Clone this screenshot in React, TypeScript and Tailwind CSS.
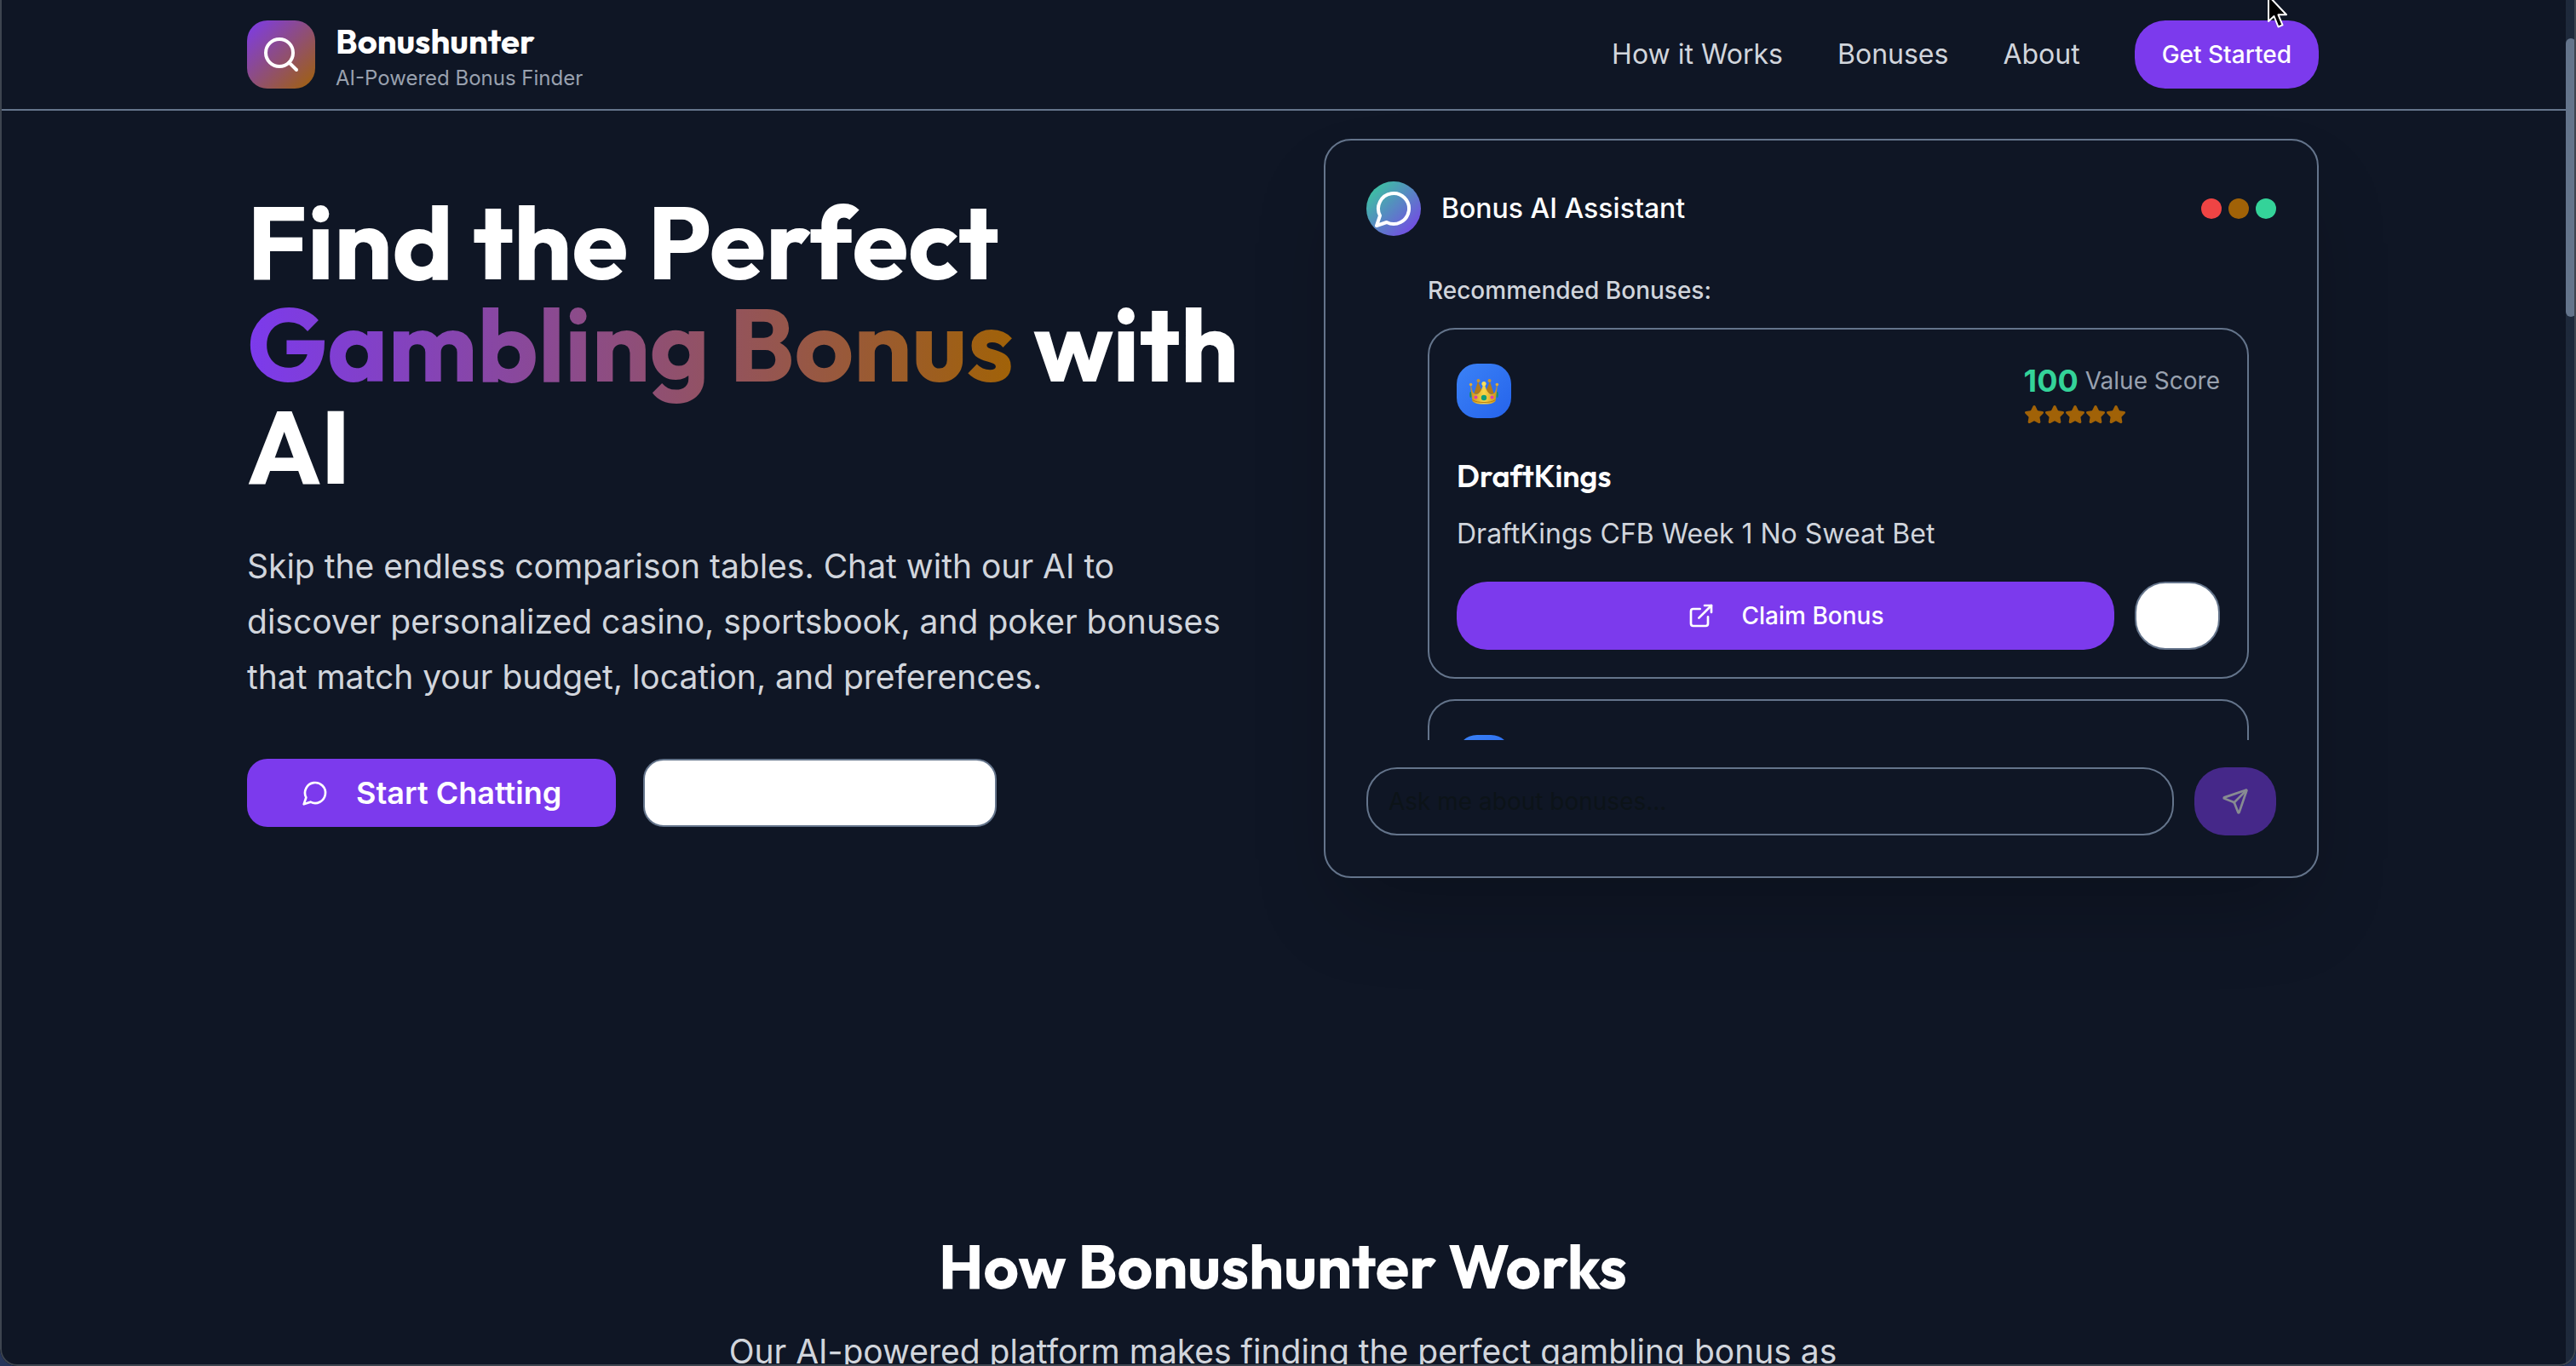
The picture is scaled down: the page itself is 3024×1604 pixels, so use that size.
import type { ReactNode } from "react";
import { ExternalLink, Search, Send, Star } from "lucide-react";

const navLinks = [
  { label: "How it Works", href: "#how-it-works" },
  { label: "Bonuses", href: "#bonuses" },
  { label: "About", href: "#about" },
];

const bonuses = [
  { brand: "DraftKings", offer: "DraftKings CFB Week 1 No Sweat Bet", score: 100 },
  { brand: "DraftKings", offer: "DraftKings CFB Week 1 No Sweat Bet", score: 100 },
];

function ChatIcon({ className }: { className: string }) {
  return (
    <svg
      viewBox="0 0 24 24"
      fill="none"
      stroke="currentColor"
      strokeWidth="2"
      strokeLinecap="round"
      strokeLinejoin="round"
      className={className}
      aria-hidden="true"
    >
      <path d="M7.9 20A9 9 0 1 0 4 16.1L2 22Z" />
    </svg>
  );
}

function CrownIcon() {
  return (
    <svg viewBox="0 0 36 32" className="w-9 h-8" aria-hidden="true">
      <defs>
        <linearGradient id="crown-front" x1="0" y1="0" x2="1" y2="0">
          <stop offset="0" stopColor="#c98d1a" />
          <stop offset="0.5" stopColor="#f8d648" />
          <stop offset="1" stopColor="#c98d1a" />
        </linearGradient>
      </defs>
      <path d="M6 20 11 5l6 14ZM30 20 25 5l-6 14Z" fill="#b07a1c" />
      <circle cx="11.5" cy="4" r="2" fill="#c9962f" />
      <circle cx="24.5" cy="4" r="2" fill="#c9962f" />
      <ellipse cx="2.4" cy="20.5" rx="1.3" ry="3.4" fill="#178f6d" />
      <ellipse cx="33.6" cy="20.5" rx="1.3" ry="3.4" fill="#178f6d" />
      <path
        d="M3 9c1 7 2 11 6 11 4 0 7-6 8-12h2c1 6 4 12 8 12 4 0 5-4 6-11l1 .5-2.500 18.500C29 31 24 31.500 18 31.500S7 31 4.500 28L2 9.500Z"
        fill="url(#crown-front)"
      />
      <path d="M4.500 26.500C8 29 13 29.500 18 29.500s10-.5 13.500-3" fill="none" stroke="#b47b14" strokeWidth="1" />
      <circle cx="2.600" cy="8.500" r="1.800" fill="#e0aa35" />
      <circle cx="33.400" cy="8.500" r="1.800" fill="#e0aa35" />
      <circle cx="18" cy="7.500" r="2.600" fill="#fbe05a" />
      <circle cx="18" cy="24" r="3.200" fill="#0f9d78" />
      <circle cx="8.500" cy="23.500" r="2" fill="#dd3fae" />
      <circle cx="27.500" cy="23.500" r="2" fill="#dd3fae" />
    </svg>
  );
}

function PrimaryButton({ className, children }: { className: string; children: ReactNode }) {
  return (
    <button type="button" className={`flex h-20 items-center justify-center gap-8 bg-[#7c3aed] text-white ${className}`}>
      {children}
    </button>
  );
}

function Header() {
  return (
    <header className="border-b-2 border-[#64748b]">
      <div className="mx-auto flex h-32 max-w-[2560px] items-center justify-between px-16">
        <a href="#" className="flex items-center gap-6">
          <span className="flex size-20 items-center justify-center rounded-3xl bg-linear-to-br/srgb from-[#7c3aed] to-[#a16207]">
            <Search className="size-12 text-white" />
          </span>
          <span className="flex flex-col">
            <span className="font-['Outfit',Lato,sans-serif] text-[40px] leading-[56px] font-bold text-white">Bonushunter</span>
            <span className="text-2xl leading-8 text-gray-400">AI-Powered Bonus Finder</span>
          </span>
        </a>
        <nav className="flex items-center gap-16 text-[32px] leading-[48px] text-gray-300">
          {navLinks.map((link) => (
            <a key={link.label} href={link.href}>
              {link.label}
            </a>
          ))}
          <PrimaryButton className="rounded-[36px] px-8 text-[28px] font-medium">Get Started</PrimaryButton>
        </nav>
      </div>
    </header>
  );
}

function BonusCard({ brand, offer, score }: { brand: string; offer: string; score: number }) {
  return (
    <article className="rounded-[32px] border-2 border-[#64748b] p-8">
      <div className="flex items-center justify-between">
        <span className="flex size-16 items-center justify-center rounded-3xl bg-linear-to-br/srgb from-[#3b82f6] to-[#2563eb]">
          <CrownIcon />
        </span>
        <div>
          <p className="flex items-center gap-2">
            <span className="text-4xl leading-[56px] font-bold text-[#34d399]">{score}</span>
            <span className="text-[28px] leading-10 text-gray-400">Value Score</span>
          </p>
          <div className="flex text-[#a16207]">
            {[1, 2, 3, 4, 5].map((n) => (
              <Star key={n} className="size-6 fill-current" />
            ))}
          </div>
        </div>
      </div>
      <h3 className="mt-8 font-['Outfit',Lato,sans-serif] text-4xl leading-[56px] font-semibold text-white">{brand}</h3>
      <p className="mt-4 text-[32px] leading-[48px] text-gray-300">{offer}</p>
      <div className="mt-8 flex gap-6">
        <PrimaryButton className="flex-1 rounded-[36px] text-[28px] font-medium">
          <ExternalLink className="size-8" />
          Claim Bonus
        </PrimaryButton>
        <button type="button" aria-label="Bonus details" className="h-20 w-25 rounded-[36px] border-2 border-[#64748b] bg-white" />
      </div>
    </article>
  );
}

function Assistant() {
  return (
    <section className="rounded-[32px] border-2 border-[#64748b] p-12 shadow-[0_50px_100px_-24px_rgba(0,0,0,0.25)]">
      <div className="flex items-center justify-between">
        <div className="flex items-center gap-6">
          <span className="flex size-16 items-center justify-center rounded-full bg-linear-to-br/srgb from-[#34d399] to-[#7c3aed]">
            <ChatIcon className="size-12 text-white" />
          </span>
          <h2 className="text-[32px] leading-[48px] font-medium text-white">Bonus AI Assistant</h2>
        </div>
        <div className="flex gap-2">
          <span className="size-6 rounded-full bg-[#ef4444]" />
          <span className="size-6 rounded-full bg-[#a16207]" />
          <span className="size-6 rounded-full bg-[#34d399]" />
        </div>
      </div>
      <div className="mt-11 h-[548px] overflow-hidden pr-8 pl-18">
        <p className="text-[28px] leading-10 font-medium text-gray-300">Recommended Bonuses:</p>
        <div className="mt-6 flex flex-col gap-6">
          {bonuses.map((bonus, i) => (
            <BonusCard key={i} {...bonus} />
          ))}
        </div>
      </div>
      <form className="mt-8 flex gap-6">
        <input
          type="text"
          aria-label="Message"
          placeholder="Ask me about bonuses..."
          className="h-20 min-w-0 flex-1 rounded-[36px] border-2 border-[#64748b] bg-transparent px-6 text-[28px] text-white placeholder:text-[#0c1318]"
        />
        <button
          type="button"
          disabled
          aria-label="Send"
          className="flex h-20 w-24 items-center justify-center rounded-[36px] bg-[#7c3aed] text-white opacity-50"
        >
          <Send className="size-8" />
        </button>
      </form>
    </section>
  );
}

function Hero() {
  return (
    <section className="mx-auto grid max-w-[2560px] grid-cols-2 items-center gap-24 px-16 pt-[33px]">
      <div>
        <h1 className="font-['Outfit',Lato,sans-serif] text-[120px] leading-[120px] font-bold text-white">
          Find the Perfect{" "}
          <span className="bg-linear-to-r/srgb from-[#7c3aed] to-[#a16207] bg-clip-text text-transparent">Gambling Bonus</span>{" "}
          with AI
        </h1>
        <p className="mt-12 text-[39px] leading-[65px] text-gray-300">
          Skip the endless comparison tables. Chat with our AI to discover personalized casino, sportsbook, and poker bonuses
          that match your budget, location, and preferences.
        </p>
        <div className="mt-16 flex gap-8">
          <PrimaryButton className="rounded-3xl px-16 text-4xl font-semibold">
            <ChatIcon className="size-8" />
            Start Chatting
          </PrimaryButton>
          <button type="button" aria-label="View bonuses" className="h-20 w-[415px] rounded-3xl border-2 border-[#64748b] bg-white" />
        </div>
      </div>
      <Assistant />
    </section>
  );
}

export default function App() {
  return (
    <div className="bg-[#26355a]">
      <div className="relative flex h-screen overflow-hidden rounded-b-[20px] bg-[#0f1625] font-['Inter',sans-serif]">
        <div className="min-w-0 flex-1">
          <Header />
          <main>
            <Hero />
            <section id="how-it-works" className="mt-56 pt-48 text-center">
              <h2 className="font-['Outfit',Lato,sans-serif] text-7xl leading-[80px] font-bold text-white">How Bonushunter Works</h2>
              <p className="mx-auto mt-8 max-w-[1344px] text-[39px] leading-[56px] text-gray-300">
                Our AI-powered platform makes finding the perfect gambling bonus as
              </p>
            </section>
          </main>
        </div>
        <div className="w-3 bg-[#1e293b] pt-[45px]">
          <div className="h-[327px] rounded-full bg-[#64748b]" />
        </div>
        <div className="pointer-events-none absolute inset-0 rounded-b-[20px] border-x-2 border-b-2 border-[#3d444f]" />
        <svg viewBox="0 0 26 36" className="pointer-events-none absolute -top-[3px] left-[2661px] h-9 w-[26px]" aria-hidden="true">
          <path d="M2 -2v30l6.500-6 5 12.500 5-2.200-5-12H23Z" fill="#000" stroke="#fff" strokeWidth="2" strokeLinejoin="round" />
        </svg>
      </div>
    </div>
  );
}
